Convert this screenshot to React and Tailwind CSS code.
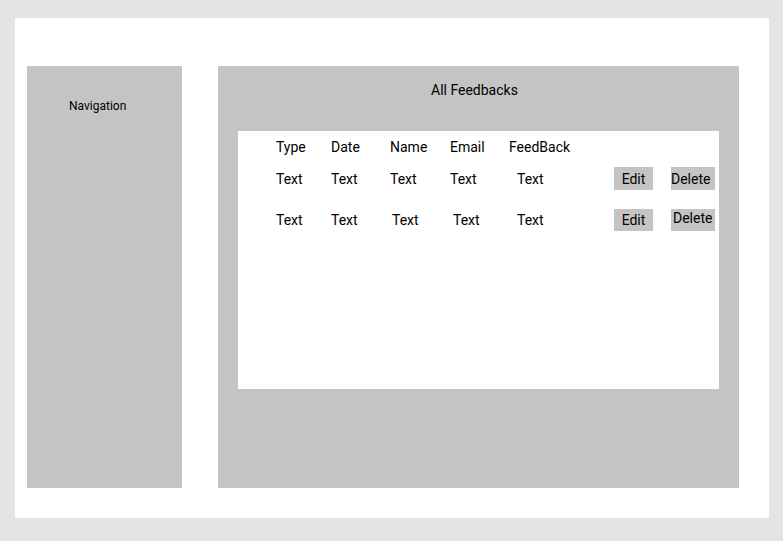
export default function App() {
  return (
    <div className="min-h-[541px] w-[783px] bg-[#e4e4e4] pt-[18px] pl-[15px] text-black" style={{ fontFamily: 'Roboto, "Liberation Sans", sans-serif' }}>
      <div className="w-[754px] h-[500px] bg-white pt-[48px] pl-[12px] flex gap-[36px]">
        <div className="w-[155px] h-[422px] bg-[#c4c4c4] pt-[32px]">
          <div className="text-[12px] leading-[16px] pl-[42px]">Navigation</div>
        </div>
        <div className="w-[521px] h-[422px] bg-[#c4c4c4] pt-[16px]">
          <div className="text-[14px] leading-[16px] pl-[213px]">All Feedbacks</div>
          <div className="ml-[20px] mt-[33px] w-[481px] h-[258px] bg-white text-[14px] leading-[16px]">
            <div className="flex items-center h-[32px] pl-[38px]">
              <div className="w-[55px]">Type</div>
              <div className="w-[59px]">Date</div>
              <div className="w-[60px]">Name</div>
              <div className="w-[59px]">Email</div>
              <div>FeedBack</div>
            </div>
            <div className="flex items-center h-[23px] mt-[4px] pl-[38px]">
              <div className="w-[55px]">Text</div>
              <div className="w-[59px]">Text</div>
              <div className="w-[60px]">Text</div>
              <div className="w-[67px]">Text</div>
              <div className="w-[97px]">Text</div>
              <div className="w-[39px] h-[23px] bg-[#c4c4c4] flex items-center justify-center">Edit</div>
              <div className="w-[18px]" />
              <div className="w-[44px] h-[23px] bg-[#c4c4c4] flex items-center">Delete</div>
            </div>
            <div className="flex items-center h-[22px] mt-[19px] pl-[38px]">
              <div className="w-[55px]">Text</div>
              <div className="w-[61px]">Text</div>
              <div className="w-[61px]">Text</div>
              <div className="w-[64px]">Text</div>
              <div className="w-[97px]">Text</div>
              <div className="w-[39px] h-[22px] bg-[#c4c4c4] flex items-center justify-center">Edit</div>
              <div className="w-[18px]" />
              <div className="w-[44px] h-[22px] bg-[#c4c4c4] flex pl-[2px] pt-[1px]">Delete</div>
            </div>
          </div>
        </div>
      </div>
    </div>
  );
}
